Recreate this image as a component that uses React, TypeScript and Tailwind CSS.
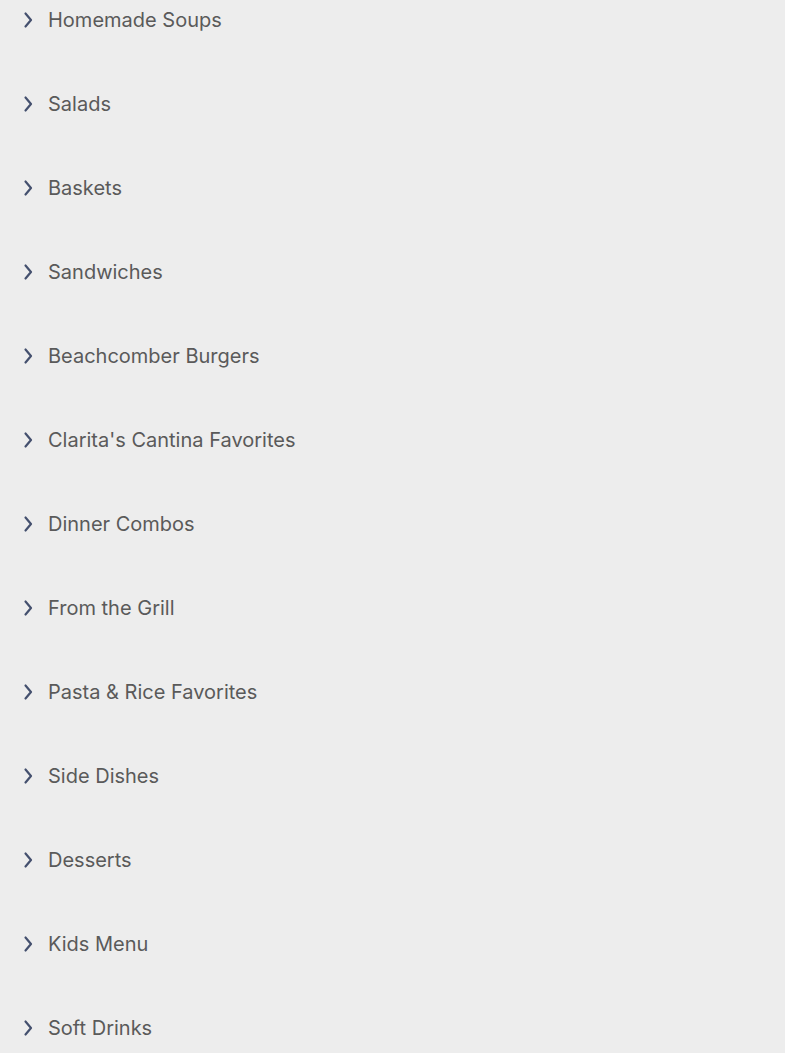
const categories = [
  "Homemade Soups",
  "Salads",
  "Baskets",
  "Sandwiches",
  "Beachcomber Burgers",
  "Clarita's Cantina Favorites",
  "Dinner Combos",
  "From the Grill",
  "Pasta & Rice Favorites",
  "Side Dishes",
  "Desserts",
  "Kids Menu",
  "Soft Drinks",
];

const Chevron = () => (
  <svg
    viewBox="0 0 10 18"
    className="w-[10px] h-[18px] shrink-0"
    fill="none"
    stroke="#44506e"
    strokeWidth={2.2}
    strokeLinecap="round"
    strokeLinejoin="round"
  >
    <path d="M2.5 2.5 L8 9 L2.5 15.5" />
  </svg>
);

const App = () => {
  return (
    <div
      className="min-h-screen w-full bg-[#ededed] pl-[23px] pt-[1px] pb-4"
      style={{ fontFamily: "Inter, 'Noto Sans', sans-serif" }}
    >
      <ul className="flex flex-col gap-[46px]">
        {categories.map((name) => (
          <li key={name} className="h-[38px] flex items-center gap-[15px]">
            <Chevron />
            <span className="text-[20px] text-[#5a5a5a] leading-none">
              {name}
            </span>
          </li>
        ))}
      </ul>
    </div>
  );
};

export default App;
